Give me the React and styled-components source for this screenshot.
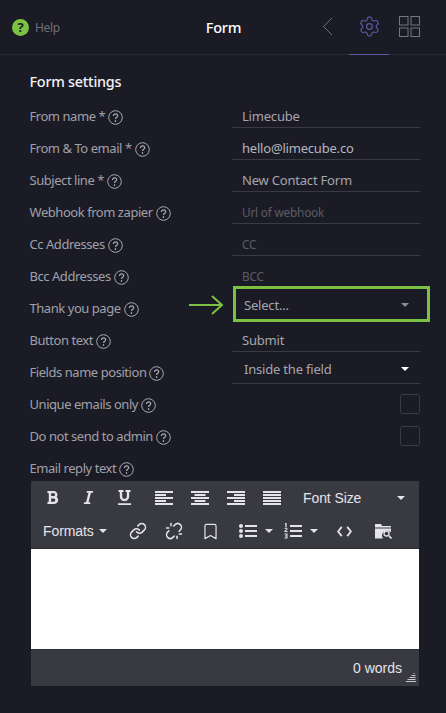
import React from "react";
import styled, { createGlobalStyle } from "styled-components";
import { Settings, Bookmark, Link as LinkIcon, Unlink } from "lucide-react";
import { FaBold, FaItalic, FaUnderline } from "react-icons/fa";

const Global = createGlobalStyle`
  html, body { margin: 0; padding: 0; background: #1b1b26; }
  body { font-family: "Noto Sans", "Open Sans", sans-serif; }
  * { box-sizing: border-box; }
`;

const Page = styled.div`
  width: 446px;
  height: 713px;
  overflow: hidden;
  background: #1b1b26;
`;
const Header = styled.header`
  display: grid;
  grid-template-columns: 1fr auto 1fr;
  align-items: stretch;
  height: 55px;
  border-bottom: 1px solid #282833;
`;
const HelpLink = styled.div`
  display: flex;
  align-items: center;
  gap: 6px;
  padding-left: 12px;
  padding-bottom: 1px;
  font-size: 12px;
  letter-spacing: -0.3px;
  color: #6f6f78;
`;
const HelpBadge = styled.span`
  width: 17px;
  height: 17px;
  border-radius: 50%;
  background: #7cc242;
  color: #1b1b26;
  font-size: 13px;
  font-weight: 700;
  line-height: 17px;
  text-align: center;
`;
const Title = styled.h1`
  margin: 0 0 2px 1px;
  align-self: center;
  font-size: 14.5px;
  font-weight: 500;
  letter-spacing: -0.2px;
  color: #fff;
`;
const Tabs = styled.nav`
  display: flex;
  justify-content: flex-end;
  padding-right: 17px;
`;
const Tab = styled.div`
  width: 40px;
  height: 55px;
  padding-bottom: 1px;
  display: flex;
  align-items: center;
  justify-content: center;
  color: ${(p) => (p.$active ? "#5d5ba3" : "#6e6e76")};
  border-bottom: 1px solid ${(p) => (p.$active ? "#5d5ba3" : "transparent")};
`;
const GridIcon = styled.svg`
  width: 21px;
  height: 21px;
  fill: none;
  stroke: #77777e;
  stroke-width: 1;
`;
const BackIcon = styled.svg`
  width: 11px;
  height: 19px;
  margin-right: 4px;
  fill: none;
  stroke: #6e6e76;
  stroke-width: 1;
`;
const Content = styled.main`
  padding: 17px 26px 0 29.5px;
`;
const SectionTitle = styled.h2`
  margin: 0 0 8px;
  height: 20px;
  line-height: 20px;
  font-size: 14.4px;
  font-weight: 500;
  letter-spacing: -0.25px;
  color: #f2f2f4;
`;
const Row = styled.div`
  position: relative;
  display: grid;
  grid-template-columns: 202.5px 188px;
  height: 32px;
  align-items: stretch;
`;
const Label = styled.label`
  display: flex;
  align-items: center;
  gap: 3px;
  font-size: 13px;
  letter-spacing: -0.45px;
  color: #a0a0a8;
  white-space: nowrap;
`;
const HintIcon = styled.svg`
  flex: none;
  width: 15px;
  height: 15px;
  margin-top: 2px;
  fill: none;
  stroke: #a8a8b0;
  stroke-width: 1;
`;
const Field = styled.div`
  display: flex;
  align-items: center;
  justify-content: space-between;
  margin: ${(p) => (p.$select ? "1px 0 4px" : "4px 0")};
  padding: 0 11px ${(p) => (p.$select ? "3px" : "0")} ${(p) => (p.$select ? "12px" : "10px")};
  border-bottom: 1px solid ${(p) => (p.$plain ? "transparent" : "#3a3a45")};
  letter-spacing: -0.2px;
  color: ${(p) => (p.$placeholder ? "#5b5b65" : p.$bright ? "#b6b6bd" : "#a6a6ad")};
  font-size: ${(p) => (p.$placeholder ? "11.8px" : "13px")};
`;
const Caret = styled.span`
  width: 0;
  height: 0;
  border-left: 4px solid transparent;
  border-right: 4px solid transparent;
  border-top: 4px solid ${(p) => p.$color || "#fff"};
  flex: none;
`;
const Highlight = styled.div`
  position: absolute;
  left: 203.5px;
  top: -6px;
  width: 197px;
  height: 36px;
  border: 3px solid #7cc242;
  pointer-events: none;
`;
const Arrow = styled.svg`
  position: absolute;
  left: 158.5px;
  top: 2px;
  width: 36px;
  height: 22px;
  fill: none;
  stroke: #7cc242;
  stroke-width: 2;
`;
const CheckBox = styled.span`
  width: 20px;
  height: 20px;
  margin-left: auto;
  margin-right: -11px;
  border: 1px solid #3a3a45;
  border-radius: 2px;
`;
const Editor = styled.section`
  margin: -3px 0 0 1.5px;
  width: 388px;
`;
const Toolbar = styled.div`
  background: #393942;
  padding: 0 3px;
  border-bottom: 1px solid #2a2a32;
  color: #e4e4e8;
`;
const ToolRow = styled.div`
  display: flex;
  align-items: center;
  height: 33.5px;
`;
const ToolButton = styled.span`
  width: ${(p) => p.$w || 36}px;
  height: 100%;
  margin-left: ${(p) => p.$ml || 0}px;
  display: flex;
  align-items: center;
  justify-content: center;
  gap: 8px;
  flex: none;
  color: #e4e4e8;
  font-size: ${(p) => p.$size || 14}px;
`;
const ToolSelect = styled.span`
  display: flex;
  align-items: center;
  justify-content: space-between;
  flex: none;
  height: 100%;
  width: ${(p) => p.$w}px;
  margin-left: ${(p) => p.$ml || 0}px;
  padding-left: ${(p) => p.$pl}px;
  padding-right: ${(p) => p.$pr}px;
  font-family: "Liberation Sans", Arial, sans-serif;
  font-size: 14px;
  letter-spacing: -0.1px;
  color: #e4e4e8;
  white-space: nowrap;
`;
const ToolSvg = styled.svg`
  width: ${(p) => p.$w || 18}px;
  height: ${(p) => p.$h || 16}px;
  fill: currentColor;
  flex: none;
`;
const EditArea = styled.div`
  height: 100px;
  background: #fff;
`;
const StatusBar = styled.footer`
  position: relative;
  height: 37px;
  display: flex;
  align-items: center;
  justify-content: flex-end;
  padding-right: 17px;
  background: #393942;
  border-top: 1px solid #2a2a32;
  font-family: "Liberation Sans", Arial, sans-serif;
  font-size: 14px;
  color: #e4e4e8;
`;
const Grip = styled.svg`
  position: absolute;
  right: 3px;
  bottom: 3px;
  width: 10px;
  height: 10px;
  stroke: #c8c8cc;
  stroke-width: 1;
`;

const Hint = () => (
  <HintIcon viewBox="0 0 15 15">
    <circle cx="7.5" cy="7.5" r="6.8" />
    <path d="M5.4 5.9c0-1.3 1-2.1 2.2-2.1s2.1.8 2.1 1.9c0 1.6-2.2 1.6-2.2 3.3" strokeWidth="1.2" />
    <circle cx="7.5" cy="11" r=".5" fill="#a8a8b0" />
  </HintIcon>
);

const AlignIcon = ({ lines }) => (
  <ToolSvg viewBox="0 0 18 16">
    {lines.map(([x, w], i) => (
      <rect key={i} x={x} y={1 + i * 3} width={w} height="2" />
    ))}
  </ToolSvg>
);

const ListLines = () => (
  <>
    <rect x="6" y="2" width="12" height="2" />
    <rect x="6" y="7" width="12" height="2" />
    <rect x="6" y="12" width="12" height="2" />
  </>
);

const rows = [
  { label: "From name *", value: "Limecube" },
  { label: "From & To email *", value: "hello@limecube.co", bright: true },
  { label: "Subject line *", value: "New Contact Form" },
  { label: "Webhook from zapier", value: "Url of webhook", placeholder: true },
  { label: "Cc Addresses", value: "CC", placeholder: true },
  { label: "Bcc Addresses", value: "BCC", placeholder: true, plain: true },
];

export default function App() {
  return (
    <Page>
      <Global />
      <Header>
        <HelpLink>
          <HelpBadge>?</HelpBadge>
          Help
        </HelpLink>
        <Title>Form</Title>
        <Tabs>
          <Tab>
            <BackIcon viewBox="0 0 11 19">
              <path d="M10 1 1.5 9.5 10 18" />
            </BackIcon>
          </Tab>
          <Tab $active>
            <Settings size={23} strokeWidth={1.2} />
          </Tab>
          <Tab>
            <GridIcon viewBox="0 0 21 21">
              <rect x=".5" y=".5" width="8.5" height="8.5" />
              <rect x="12" y=".5" width="8.5" height="8.5" />
              <rect x=".5" y="12" width="8.5" height="8.5" />
              <rect x="12" y="12" width="8.5" height="8.5" />
            </GridIcon>
          </Tab>
        </Tabs>
      </Header>
      <Content>
        <SectionTitle>Form settings</SectionTitle>
        {rows.map((r) => (
          <Row key={r.label}>
            <Label>
              {r.label}
              <Hint />
            </Label>
            <Field $placeholder={r.placeholder} $bright={r.bright} $plain={r.plain}>
              {r.value}
            </Field>
          </Row>
        ))}
        <Row>
          <Label>
            Thank you page
            <Hint />
          </Label>
          <Field $select $plain>
            Select...
            <Caret $color="#8a8a92" />
          </Field>
          <Arrow viewBox="0 0 36 22">
            <path d="M1 11h33M24 2l10 9-10 9" />
          </Arrow>
          <Highlight />
        </Row>
        <Row>
          <Label>
            Button text
            <Hint />
          </Label>
          <Field>Submit</Field>
        </Row>
        <Row>
          <Label>
            Fields name position
            <Hint />
          </Label>
          <Field $select>
            Inside the field
            <Caret />
          </Field>
        </Row>
        <Row>
          <Label>
            Unique emails only
            <Hint />
          </Label>
          <Field $plain>
            <CheckBox />
          </Field>
        </Row>
        <Row>
          <Label>
            Do not send to admin
            <Hint />
          </Label>
          <Field $plain>
            <CheckBox />
          </Field>
        </Row>
        <Row>
          <Label>
            Email reply text
            <Hint />
          </Label>
        </Row>
        <Editor>
          <Toolbar>
            <ToolRow>
              <ToolButton $size={15}><FaBold /></ToolButton>
              <ToolButton $size={15}><FaItalic /></ToolButton>
              <ToolButton $size={15}><FaUnderline /></ToolButton>
              <ToolButton $ml={4}><AlignIcon lines={[[0, 18], [0, 11], [0, 18], [0, 11], [0, 18]]} /></ToolButton>
              <ToolButton><AlignIcon lines={[[0, 18], [3.5, 11], [0, 18], [3.5, 11], [0, 18]]} /></ToolButton>
              <ToolButton><AlignIcon lines={[[0, 18], [7, 11], [0, 18], [7, 11], [0, 18]]} /></ToolButton>
              <ToolButton><AlignIcon lines={[[0, 18], [0, 18], [0, 18], [0, 18], [0, 18]]} /></ToolButton>
              <ToolSelect $w={123} $pl={13} $pr={8}>
                Font Size
                <Caret $color="#e4e4e8" />
              </ToolSelect>
            </ToolRow>
            <ToolRow>
              <ToolSelect $w={75} $pl={9} $pr={2}>
                Formats
                <Caret $color="#e4e4e8" />
              </ToolSelect>
              <ToolButton $ml={11}><LinkIcon size={18} strokeWidth={2} /></ToolButton>
              <ToolButton><Unlink size={18} strokeWidth={2} /></ToolButton>
              <ToolButton><Bookmark size={19} strokeWidth={1.5} /></ToolButton>
              <ToolButton $w={45} $ml={5}>
                <ToolSvg viewBox="0 0 18 16">
                  <circle cx="2" cy="3" r="2" />
                  <circle cx="2" cy="8" r="2" />
                  <circle cx="2" cy="13" r="2" />
                  <ListLines />
                </ToolSvg>
                <Caret $color="#e4e4e8" />
              </ToolButton>
              <ToolButton $w={45}>
                <ToolSvg viewBox="0 0 18 16">
                  <path d="M1 0h1.6v4.4H1.4V1.2H1zM.5 5.2h3v1.1L1.8 8h1.8v1H.4V8l2-2H.5zM.5 10.5h3v5h-3v-1h2v-1H1v-1h1.5v-1h-2z" />
                  <ListLines />
                </ToolSvg>
                <Caret $color="#e4e4e8" />
              </ToolButton>
              <ToolButton $ml={3}>
                <ToolSvg viewBox="0 0 16 12" $w={15} $h={11}>
                  <path d="M5 1 1 6l4 5M11 1l4 5-4 5" fill="none" stroke="currentColor" strokeWidth="2" />
                </ToolSvg>
              </ToolButton>
              <ToolButton $ml={3}>
                <ToolSvg viewBox="0 0 18 16">
                  <path fillRule="evenodd" d="M1 1h6l1 2h9v1.5H1zM1 5.5h16v4a5 5 0 0 0-8 6H1z" />
                  <circle cx="12.5" cy="10.5" r="2.5" fill="none" stroke="currentColor" strokeWidth="1.3" />
                  <path d="m14.5 12.5 3 3" stroke="currentColor" strokeWidth="1.6" />
                </ToolSvg>
              </ToolButton>
            </ToolRow>
          </Toolbar>
          <EditArea />
          <StatusBar>
            0 words
            <Grip viewBox="0 0 10 10">
              <path d="M7.5.5h1M5.5 2.5h4M3.5 4.5h6M1.5 6.5h8M0 8.5h10" />
            </Grip>
          </StatusBar>
        </Editor>
      </Content>
    </Page>
  );
}
